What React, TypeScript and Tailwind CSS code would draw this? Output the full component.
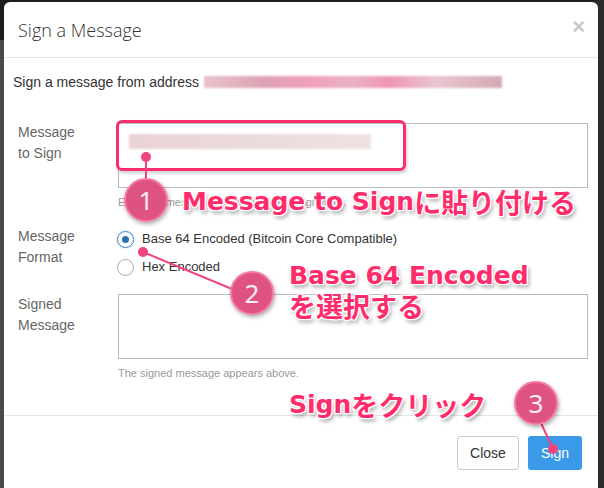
import React from "react";

const ann =
  "absolute font-['DejaVu_Sans','Noto_Sans_CJK_JP',sans-serif] font-bold text-[#ff2c6c] text-[25px] leading-none whitespace-nowrap [text-shadow:1px_1px_0_#fff,-1px_-1px_0_#fff,1px_-1px_0_#fff,-1px_1px_0_#fff,0_0_3px_#fff,0_0_4px_#fff,2px_3px_4px_rgba(0,0,0,0.45)]";
const jp = "font-['Noto_Sans_CJK_JP',sans-serif] font-bold text-[27px]";
const circ =
  "absolute w-[44px] h-[44px] rounded-full bg-[#dd4a7b]/95 border-2 border-[#f37aa0] flex items-center justify-center text-white/90 text-[26px] font-['Noto_Sans',sans-serif] shadow-[1px_2px_4px_rgba(0,0,0,0.35)]";

export default function App() {
  return (
    <div className="relative w-[604px] h-[488px] overflow-hidden bg-[#4a4a4a] font-['Liberation_Sans',Arial,sans-serif]">
      <div className="absolute inset-x-0 top-0 h-[40px] bg-[#1e1e1e]" />
      <div className="absolute right-0 top-0 bottom-0 w-[8px] bg-[#2a2a2a]" />
      <div className="relative ml-[4px] mt-[2px] w-[594px] h-[520px] bg-white rounded-t-[6px] flex flex-col">
        {/* header */}
        <div className="h-[56px] border-b border-[#e5e5e5] flex items-center justify-between pl-[14px] pr-[13px]">
          <span className="font-['Open_Sans',sans-serif] font-light text-[18px] text-[#333] pt-[2px]">Sign a Message</span>
          <span className="text-[22px] font-bold text-[#c8c8c8] leading-none -mt-[6px]">×</span>
        </div>
        {/* body */}
        <div className="pl-[9px] pr-[10px] pt-[15px]">
          <div className="flex items-center text-[14px] text-[#333] leading-[18px]">
            <span>Sign a message from address&nbsp;</span>
            <span className="ml-[1px] w-[298px] h-[12px] bg-[linear-gradient(90deg,#e7c3cc,#dda3b4_20%,#f2a0ba_35%,#e9b2c2_50%,#f096b2_62%,#e8c6cf_78%,#d6a9b4)] blur-[1px]" />
          </div>

          <div className="mt-[32px] pl-[5px] flex">
            <div className="w-[100px] text-[14px] leading-[21px] text-[#666] -mt-[1px]">
              Message<br />to Sign
            </div>
            <div className="flex-1">
              <div className="h-[65px] border border-[#bbb] relative">
                <div className="absolute left-[10px] top-[10px] w-[242px] h-[15px] bg-[linear-gradient(90deg,#ead3d5,#ecdcdc_60%,#f0e2e2)] blur-[1px]" />
              </div>
              <div className="mt-[7px] text-[11px] leading-[15px] text-[#999]">Enter the message you would like to sign here.</div>
            </div>
          </div>

          <div className="mt-[16px] pl-[5px] flex">
            <div className="w-[100px] text-[14px] leading-[21px] text-[#666]">
              Message<br />Format
            </div>
            <div className="flex-1 pt-[4px] text-[13px] text-[#333]">
              <div className="flex items-center h-[18px]">
                <span className="w-[17px] h-[17px] rounded-full border border-[#3d84c8] flex items-center justify-center ml-[-1px] shadow-[0_0_2px_rgba(61,132,200,0.5)]">
                  <span className="w-[7px] h-[7px] rounded-full bg-[#2f6eb0]" />
                </span>
                <span className="ml-[8px]">Base 64 Encoded (Bitcoin Core Compatible)</span>
              </div>
              <div className="flex items-center h-[18px] mt-[10px]">
                <span className="w-[17px] h-[17px] rounded-full border border-[#aaa] ml-[-1px]" />
                <span className="ml-[8px]">Hex Encoded</span>
              </div>
            </div>
          </div>

          <div className="mt-[18px] pl-[5px] flex">
            <div className="w-[100px] text-[14px] leading-[21px] text-[#666]">
              Signed<br />Message
            </div>
            <div className="flex-1">
              <div className="h-[65px] border border-[#bbb]" />
              <div className="mt-[7px] text-[11px] leading-[15px] text-[#999]">The signed message appears above.</div>
            </div>
          </div>
        </div>
        {/* footer */}
        <div className="mt-[34px] border-t border-[#e5e5e5] pt-[20px] pr-[16px] flex justify-end gap-[9px]">
          <button className="h-[34px] w-[62px] border border-[#ccc] rounded-[3px] bg-white text-[14px] text-[#333]">Close</button>
          <button className="h-[34px] w-[54px] rounded-[3px] bg-[#3a9ae9] text-[14px] text-white">Sign</button>
        </div>
      </div>

      {/* annotations */}
      <div className="absolute left-[116px] top-[120px] w-[290px] h-[51px] rounded-[6px] border-[3px] border-[#fa2e6c] shadow-[0_0_3px_rgba(255,255,255,0.9),1px_2px_3px_rgba(0,0,0,0.25)]" />
      <svg className="absolute inset-0" width="604" height="488">
        <g stroke="#f0447c" strokeWidth="2" fill="#f0447c">
          <line x1="146" y1="157" x2="146" y2="180" />
          <circle cx="146" cy="157" r="5" stroke="none" />
          <line x1="143" y1="252" x2="232" y2="289" />
          <circle cx="143" cy="252" r="5" stroke="none" />
          <line x1="541" y1="423" x2="553" y2="449" />
          <circle cx="553" cy="449" r="5" stroke="none" />
        </g>
      </svg>
      <div className={circ + " left-[124px] top-[178px]"}>1</div>
      <div className={circ + " left-[230px] top-[271px]"}>2</div>
      <div className={circ + " left-[514px] top-[381px]"}>3</div>

      <div className={ann + " left-[182px] top-[187px] flex items-center h-[28px]"}>
        <span>Message to Sign</span><span className={jp}>に貼り付ける</span>
      </div>
      <div className={ann + " left-[289px] top-[261px] flex items-center h-[28px]"}>Base 64 Encoded</div>
      <div className={ann + " left-[289px] top-[291px] flex items-center h-[28px]"}>
        <span className={jp}>を選択する</span>
      </div>
      <div className={ann + " left-[289px] top-[390px] flex items-center h-[28px]"}>
        <span>Sign</span><span className={jp}>をクリック</span>
      </div>
    </div>
  );
}
